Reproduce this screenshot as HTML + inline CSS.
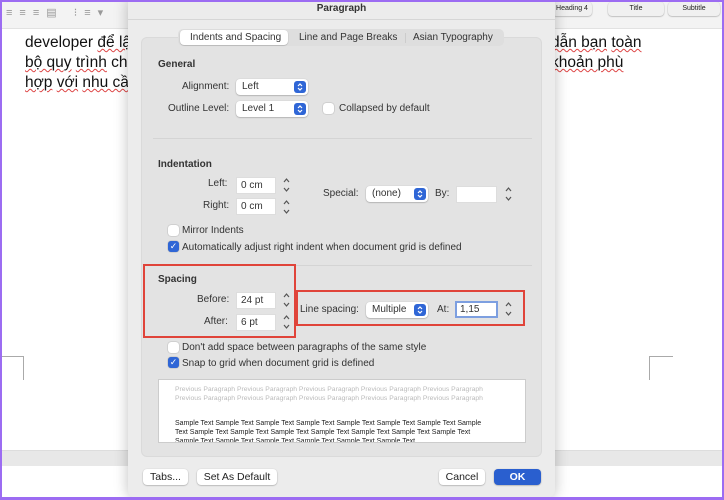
<!DOCTYPE html>
<html><head><meta charset="utf-8"><style>
*{box-sizing:border-box;margin:0;padding:0}
body{width:724px;height:500px;position:relative;overflow:hidden;background:#fff;font-family:"Liberation Sans",Arial,sans-serif;font-size:10px;color:#222}
.a{position:absolute}
.doc{font-size:15.5px;color:#111;line-height:20px}
.u{text-decoration:underline wavy #d44;text-decoration-thickness:1px}
.lbl{position:absolute;font-size:10px;color:#333;white-space:nowrap}
.b{font-weight:bold;color:#333}
.pop{position:absolute;height:16px;background:#fff;border-radius:4px;box-shadow:0 0.5px 1.5px rgba(0,0,0,.35);font-size:10px;padding:2px 6px;color:#333}
.pop svg{position:absolute;right:2px;top:2px}
.fld{position:absolute;height:17px;background:#fff;border:1px solid #ddd;font-size:10px;padding:2px 4px;color:#333}
.stp{position:absolute;width:9px;height:18px}
.cb{position:absolute;width:11px;height:11px;border-radius:3px;background:#fff;box-shadow:0 0 1px rgba(0,0,0,.5)}
.cb.on{background:#2f66d6;color:#fff;font-size:9px;line-height:11px;text-align:center}
.btn{position:absolute;height:16px;background:#fff;border-radius:4px;box-shadow:0 0.5px 1.5px rgba(0,0,0,.35);font-size:10.5px;text-align:center;line-height:16px;color:#222}
.red{position:absolute;border:2px solid #e0443a}
</style></head><body>
<svg width="0" height="0" style="position:absolute"><defs>
<symbol id="pi" viewBox="0 0 12 12"><rect width="12" height="12" rx="3" fill="#2f66d6"/><path d="M4 5 L6 3 L8 5 M4 7 L6 9 L8 7" stroke="#fff" stroke-width="1.2" fill="none"/></symbol>
<symbol id="st" viewBox="0 0 9 18"><path d="M2 6 L4.5 3 L7 6 M2 12 L4.5 15 L7 12" stroke="#555" stroke-width="1.2" fill="none"/></symbol>
</defs></svg>
<!-- toolbar -->
<div class="a" style="left:0;top:0;width:724px;height:29px;background:#f3f3f3;border-bottom:1px solid #e2e2e2"></div>
<div class="a" style="left:6px;top:6px;color:#999;font-size:11px;letter-spacing:7px">≡≡≡▤ ⁝≡▾</div>
<div class="btn" style="left:552px;top:2px;width:40px;height:14px;font-size:7px;line-height:14px;background:#f0f0f0">Heading 4</div>
<div class="btn" style="left:608px;top:2px;width:56px;height:14px;font-size:7px;line-height:14px;background:#f0f0f0">Title</div>
<div class="btn" style="left:668px;top:2px;width:52px;height:14px;font-size:7px;line-height:14px;background:#f0f0f0">Subtitle</div>
<div class="a doc" style="left:25px;top:33px">developer <span class="u">để lập</span><br><span class="u">bộ quy</span> <span class="u">trình</span> chi<br><span class="u">hợp</span> <span class="u">với</span> <span class="u">nhu cầu</span></div>
<div class="a doc" style="left:551px;top:33px"><span class="u">dẫn bạn</span> <span class="u">toàn</span><br><span class="u">khoản phù</span></div>
<div class="a" style="left:2px;top:356px;width:22px;height:24px;border-top:1px solid #aaa;border-right:1px solid #aaa"></div>
<div class="a" style="left:649px;top:356px;width:24px;height:24px;border-top:1px solid #aaa;border-left:1px solid #aaa"></div>
<div class="a" style="left:0;top:450px;width:724px;height:16px;background:#e8e8e8;border-top:1px solid #ddd"></div>
<!-- dialog -->
<div class="a" style="left:128px;top:0;width:427px;height:498px;background:#ececec;border-radius:0 0 8px 8px;box-shadow:0 0 14px rgba(0,0,0,.25)"></div>
<div class="a" style="left:128px;top:0;width:427px;height:20px;border-bottom:1px solid #d6d6d6;text-align:center;font-weight:bold;font-size:10px;line-height:18px;color:#333">Paragraph</div>
<div class="a" style="left:141px;top:37px;width:401px;height:420px;background:#e3e3e3;border-radius:6px;border:1px solid #dadada"></div>
<div class="a" style="left:178px;top:29px;width:326px;height:17px;background:#dedede;border-radius:5px"></div>
<div class="a" style="left:180px;top:30px;width:108px;height:15px;background:#fff;border-radius:4px;box-shadow:0 0.5px 1px rgba(0,0,0,.3)"></div>
<div class="lbl" style="left:190px;top:32px">Indents and Spacing</div>
<div class="lbl" style="left:299px;top:32px">Line and Page Breaks</div>
<div class="a" style="left:405px;top:33px;width:1px;height:10px;background:#ccc"></div>
<div class="lbl" style="left:413px;top:32px">Asian Typography</div>

<div class="lbl b" style="left:158px;top:59px">General</div>
<div class="lbl" style="left:182px;top:81px">Alignment:</div>
<div class="pop" style="left:236px;top:79px;width:72px">Left<svg width="12" height="12"><use href="#pi"/></svg></div>
<div class="lbl" style="left:168px;top:103px">Outline Level:</div>
<div class="pop" style="left:236px;top:101px;width:72px">Level 1<svg width="12" height="12"><use href="#pi"/></svg></div>
<div class="cb" style="left:323px;top:103px"></div>
<div class="lbl" style="left:339px;top:103px">Collapsed by default</div>
<div class="a" style="left:153px;top:138px;width:379px;height:1px;background:#d4d4d4"></div>

<div class="lbl b" style="left:158px;top:159px">Indentation</div>
<div class="lbl" style="left:208px;top:178px">Left:</div>
<div class="fld" style="left:236px;top:177px;width:40px">0 cm</div>
<svg class="stp" style="left:282px;top:176px"><use href="#st"/></svg>
<div class="lbl" style="left:203px;top:200px">Right:</div>
<div class="fld" style="left:236px;top:198px;width:40px">0 cm</div>
<svg class="stp" style="left:282px;top:198px"><use href="#st"/></svg>
<div class="lbl" style="left:323px;top:188px">Special:</div>
<div class="pop" style="left:366px;top:186px;width:62px">(none)<svg width="12" height="12"><use href="#pi"/></svg></div>
<div class="lbl" style="left:435px;top:188px">By:</div>
<div class="fld" style="left:456px;top:186px;width:41px"></div>
<svg class="stp" style="left:504px;top:185px"><use href="#st"/></svg>
<div class="cb" style="left:168px;top:225px"></div>
<div class="lbl" style="left:182px;top:225px">Mirror Indents</div>
<div class="cb on" style="left:168px;top:241px">✓</div>
<div class="lbl" style="left:182px;top:242px">Automatically adjust right indent when document grid is defined</div>
<div class="a" style="left:153px;top:265px;width:379px;height:1px;background:#d4d4d4"></div>

<div class="red" style="left:143px;top:264px;width:153px;height:74px"></div>
<div class="lbl b" style="left:158px;top:274px">Spacing</div>
<div class="lbl" style="left:197px;top:294px">Before:</div>
<div class="fld" style="left:236px;top:292px;width:40px">24 pt</div>
<svg class="stp" style="left:282px;top:291px"><use href="#st"/></svg>
<div class="lbl" style="left:204px;top:316px">After:</div>
<div class="fld" style="left:236px;top:314px;width:40px">6 pt</div>
<svg class="stp" style="left:282px;top:313px"><use href="#st"/></svg>
<div class="red" style="left:296px;top:290px;width:229px;height:36px"></div>
<div class="lbl" style="left:300px;top:304px">Line spacing:</div>
<div class="pop" style="left:366px;top:302px;width:62px">Multiple<svg width="12" height="12"><use href="#pi"/></svg></div>
<div class="lbl" style="left:437px;top:304px">At:</div>
<div class="fld" style="left:455px;top:301px;width:43px;border:2px solid #7d9fe0;padding:1px 3px">1,15</div>
<svg class="stp" style="left:504px;top:300px"><use href="#st"/></svg>
<div class="cb" style="left:168px;top:342px"></div>
<div class="lbl" style="left:182px;top:342px">Don't add space between paragraphs of the same style</div>
<div class="cb on" style="left:168px;top:357px">✓</div>
<div class="lbl" style="left:182px;top:358px">Snap to grid when document grid is defined</div>

<div class="a" style="left:158px;top:379px;width:368px;height:64px;background:#fff;border:1px solid #ccc;overflow:hidden;padding:5px 0 0 16px;font-size:6.8px;line-height:9px;white-space:nowrap">
<div style="color:#bbb">Previous Paragraph Previous Paragraph Previous Paragraph Previous Paragraph Previous Paragraph<br>Previous Paragraph Previous Paragraph Previous Paragraph Previous Paragraph Previous Paragraph</div>
<div style="color:#222;margin-top:16px;font-size:7px">Sample Text Sample Text Sample Text Sample Text Sample Text Sample Text Sample Text Sample<br>Text Sample Text Sample Text Sample Text Sample Text Sample Text Sample Text Sample Text<br>Sample Text Sample Text Sample Text Sample Text Sample Text Sample Text</div></div>

<div class="btn" style="left:143px;top:469px;width:45px">Tabs...</div>
<div class="btn" style="left:197px;top:469px;width:80px">Set As Default</div>
<div class="btn" style="left:439px;top:469px;width:46px">Cancel</div>
<div class="btn" style="left:494px;top:469px;width:47px;background:#2a5fcf;color:#fff;font-weight:bold">OK</div>
<!-- purple frame -->
<div class="a" style="left:0;top:0;width:724px;height:500px;border:2px solid #9c6cf2;border-bottom-width:3px"></div>
</body></html>
